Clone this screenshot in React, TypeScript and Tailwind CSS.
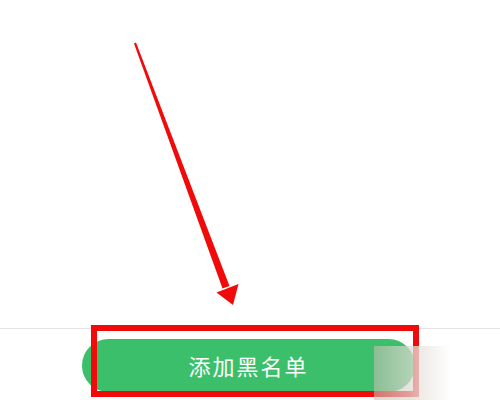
export default function App() {
  return (
    <div className="relative h-[400px] w-[500px] overflow-hidden bg-white">
      <div className="h-[328px]" />
      <div className="border-t border-[#e2e2e2] pl-[82px] pt-[10px]">
        <button className="flex h-[53px] w-[333px] items-center justify-center rounded-full bg-[#3cbf6a] text-[22px] font-normal tracking-[2px] text-white [font-family:'Noto_Sans_CJK_SC',sans-serif]">
          添加黑名单
        </button>
      </div>

      {/* annotation: red box */}
      <div className="pointer-events-none absolute left-[91px] top-[325px] h-[72px] w-[328px] border-[6px] border-[#f00a0a]" />

      {/* annotation: arrow */}
      <svg className="pointer-events-none absolute left-0 top-0" width="500" height="400" viewBox="0 0 500 400">
        <polygon points="134,43.4 136,42.6 229.5,286 222.5,288.6" fill="#f00a0a" />
        <polygon points="216.5,292.5 238.5,284 233,305" fill="#f00a0a" />
      </svg>

      {/* watermark */}
      <div className="pointer-events-none absolute left-[374px] top-[346px] h-[54px] w-[118px] bg-[linear-gradient(to_right,rgba(196,190,178,0.58)_0%,rgba(222,216,208,0.72)_30%,rgba(255,255,255,0.95)_65%,rgba(255,255,255,0.98)_100%)]" />
    </div>
  )
}
